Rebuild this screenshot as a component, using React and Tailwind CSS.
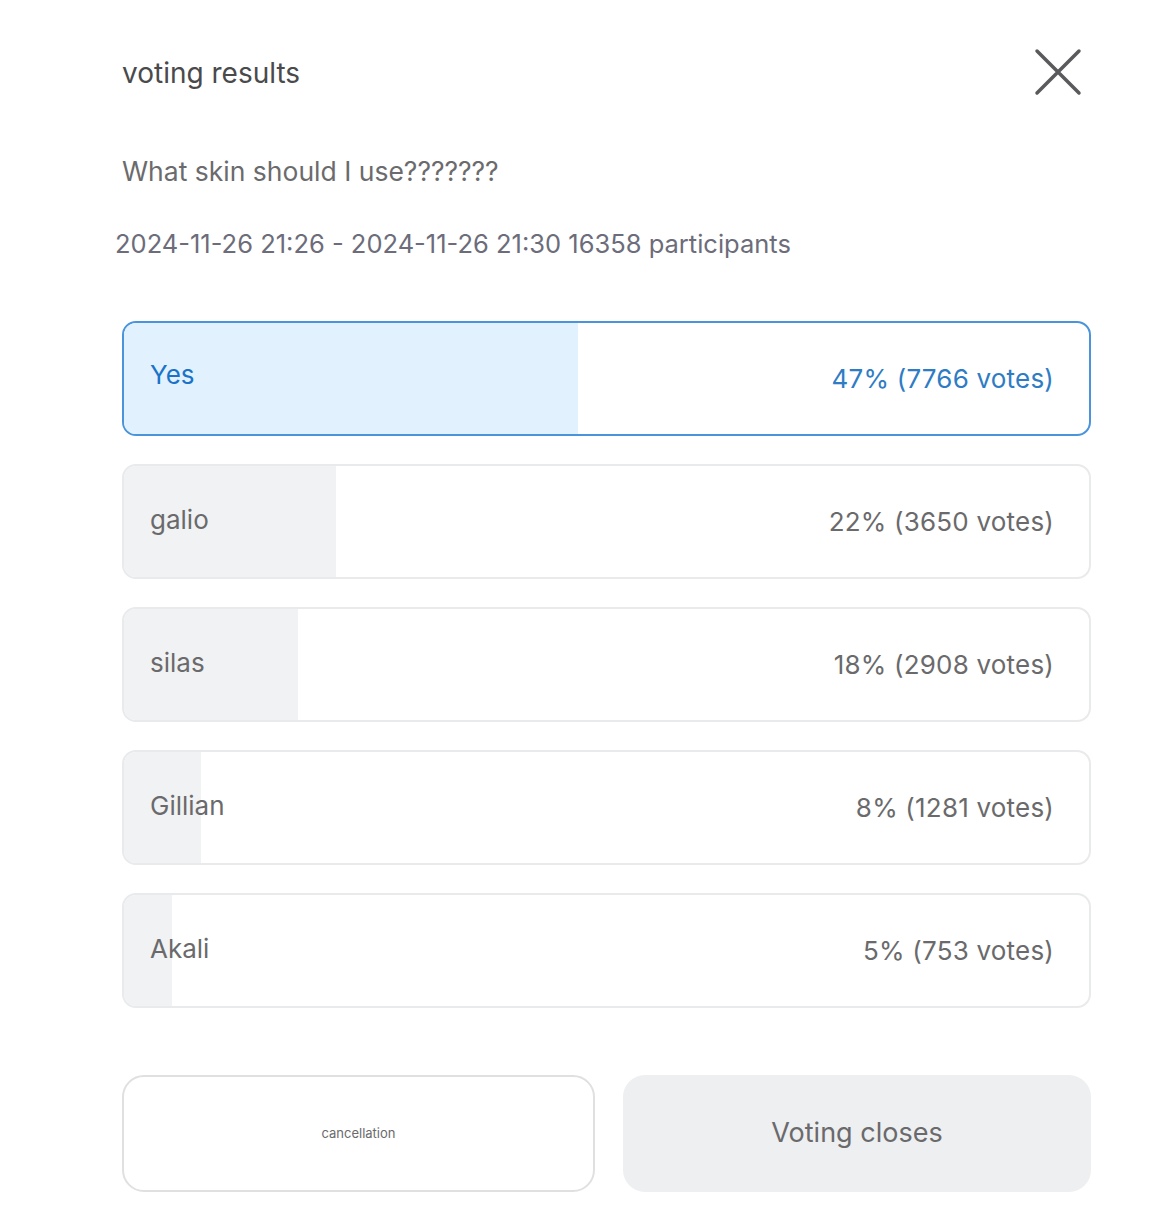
import React from 'react'

const options = [
  { label: 'Yes', pct: 47, votes: 7766, selected: true },
  { label: 'galio', pct: 22, votes: 3650 },
  { label: 'silas', pct: 18, votes: 2908 },
  { label: 'Gillian', pct: 8, votes: 1281 },
  { label: 'Akali', pct: 5, votes: 753 },
]

const OptionRow = ({ option }) => {
  const selected = option.selected
  return (
    <div
      className={`relative h-[115px] rounded-[14px] border-2 overflow-hidden ${
        selected ? 'border-[#4a94dc] bg-white' : 'border-[#e9eaec] bg-white'
      }`}
    >
      <div
        className={`absolute inset-y-0 left-0 ${selected ? 'bg-[#e1f1fd]' : 'bg-[#f1f2f3]'}`}
        style={{ width: `${option.pct}%` }}
      />
      <div className="relative flex h-full items-center justify-between pl-[26px] pr-[35px]">
        <span className={`text-[26px] ${selected ? 'text-[#1a73c9] -mt-2' : 'text-[#6a6a6c] -mt-1'}`}>
          {option.label}
        </span>
        <span className={`text-[26px] tracking-[0.2px] ${selected ? 'text-[#2e7cc4]' : 'text-[#6a6a6c]'}`}>
          {option.pct}% ({option.votes} votes)
        </span>
      </div>
    </div>
  )
}

export default function App() {
  return (
    <div className="min-h-[1224px] w-[1170px] bg-white font-['Inter',sans-serif]">
      <div className="pl-[122px] pr-[80px] pt-[48px]">
        {/* Header */}
        <div className="flex items-center justify-between">
          <h1 className="text-[28px] text-[#4a4a4c] leading-none mt-[1px]">voting results</h1>
          <button className="mr-[8px] text-[#5a5a5c]">
            <svg width="48" height="48" viewBox="0 0 48 48" fill="none" stroke="currentColor" strokeWidth="3.5" strokeLinecap="round">
              <path d="M3 3 L45 45 M45 3 L3 45" />
            </svg>
          </button>
        </div>

        <p className="mt-[62px] text-[26.5px] text-[#6b6b6d] leading-none">What skin should I use???????</p>
        <p className="mt-[46px] -ml-[7px] text-[25.5px] text-[#6c6c7a] leading-none">
          2024-11-26 21:26 - 2024-11-26 21:30 16358 participants
        </p>

        {/* Options */}
        <div className="mt-[65px] mr-[-1px] flex flex-col gap-[28px]">
          {options.map(option => (
            <OptionRow key={option.label} option={option} />
          ))}
        </div>

        {/* Actions */}
        <div className="mt-[67px] mr-[-1px] flex gap-[28px]">
          <button className="flex h-[117px] w-[473px] items-center justify-center rounded-[22px] border-2 border-[#e0e0e2] bg-white text-[13px] text-[#6a6a6c]">
            cancellation
          </button>
          <button className="flex h-[117px] flex-1 items-center justify-center rounded-[22px] bg-[#eeeff0] text-[27px] text-[#6a6a6c]">
            Voting closes
          </button>
        </div>
      </div>
    </div>
  )
}
